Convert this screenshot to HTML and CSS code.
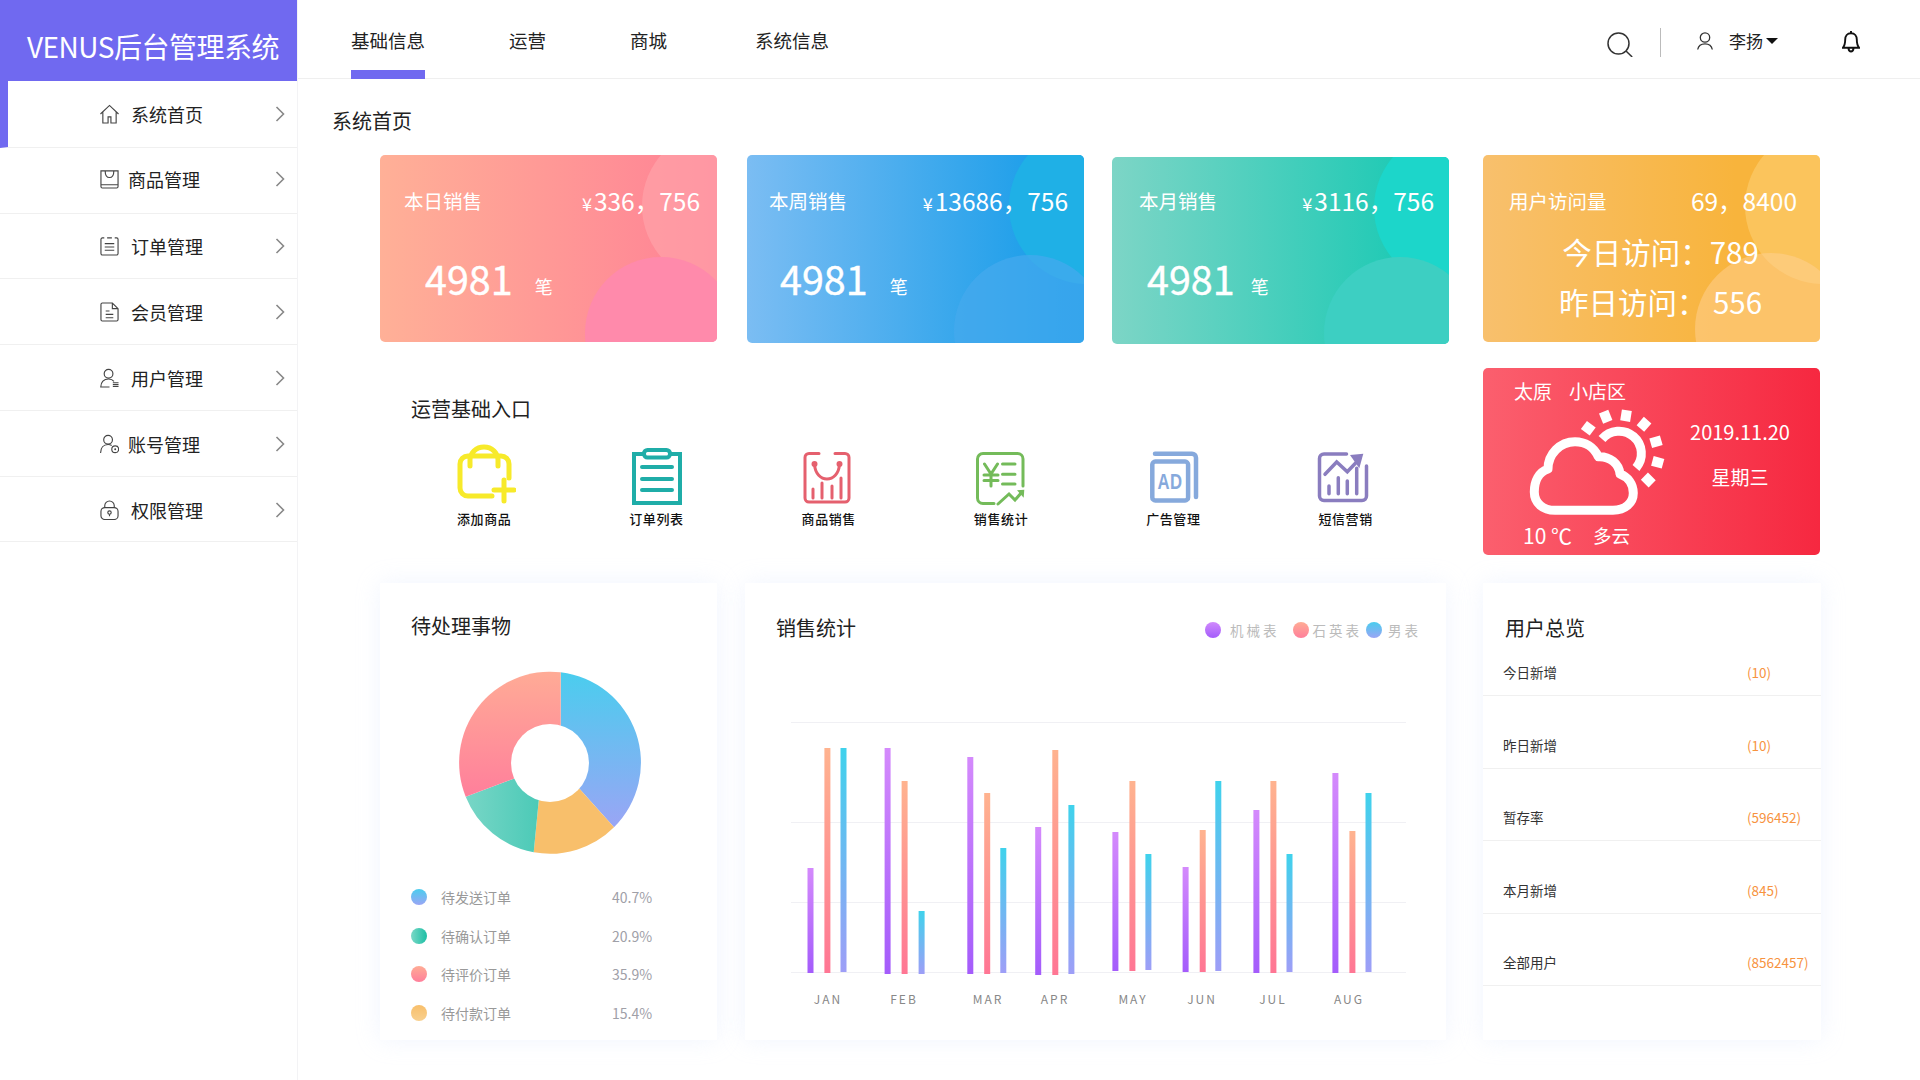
FILE: index.html
```html
<!DOCTYPE html>
<html lang="zh-CN">
<head>
    <meta charset="UTF-8">
    <title>VENUS后台管理系统</title>
    <link rel="stylesheet" href="styles.css">
</head>
<body>
<div class="app">
    <aside class="sidebar">
        <div class="logo">VENUS后台管理系统</div>
        <nav class="side-nav">
            <a class="side-item active">
                <svg class="side-icon" viewBox="0 0 20 20"><path d="M.5 10 10 1l9.500 9M3 8v11.500h5.500V13h3v6.500H17V8"/></svg>
                <span>系统首页</span>
                <svg class="chevron" viewBox="0 0 10 16"><path d="M1.500 1 8.500 8l-7 7"/></svg>
            </a>
            <a class="side-item tight">
                <svg class="side-icon" viewBox="0 0 20 20"><path d="M1 1.500h18V18a1.500 1.500 0 0 1-1.500 1.500h-15A1.500 1.500 0 0 1 1 18zM1 16h18M5.500 2c0 8.500 9 8.500 9 0"/></svg>
                <span>商品管理</span>
                <svg class="chevron" viewBox="0 0 10 16"><path d="M1.500 1 8.500 8l-7 7"/></svg>
            </a>
            <a class="side-item short">
                <svg class="side-icon" viewBox="0 0 20 20"><path d="M4.500 1.500h-2A1.500 1.500 0 0 0 1 3v15a1.500 1.500 0 0 0 1.500 1.500h15A1.500 1.500 0 0 0 19 18V3a1.500 1.500 0 0 0-1.500-1.500h-2M7.500 1.500h5M5 7.500h10M5 11h10M5 14.500h10"/></svg>
                <span>订单管理</span>
                <svg class="chevron" viewBox="0 0 10 16"><path d="M1.500 1 8.500 8l-7 7"/></svg>
            </a>
            <a class="side-item">
                <svg class="side-icon" viewBox="0 0 20 20"><path d="M2.500.5H13l6 6V18a1.500 1.500 0 0 1-1.500 1.500h-15A1.500 1.500 0 0 1 1 18V2A1.500 1.500 0 0 1 2.500.5zM13 .5v6h6M6 9h4M6 12.500h8M6 16h8"/></svg>
                <span>会员管理</span>
                <svg class="chevron" viewBox="0 0 10 16"><path d="M1.500 1 8.500 8l-7 7"/></svg>
            </a>
            <a class="side-item">
                <svg class="side-icon" viewBox="0 0 20 20"><circle cx="9" cy="5.500" r="4.600"/><path d="M10 19.500H.8c0-5 3.200-8.500 8.200-8.500 2.500 0 4.500 1 5.700 2.500M13.500 15H19.500M13.500 17H19.500M13.500 19H19.500"/></svg>
                <span>用户管理</span>
                <svg class="chevron" viewBox="0 0 10 16"><path d="M1.500 1 8.500 8l-7 7"/></svg>
            </a>
            <a class="side-item tight">
                <svg class="side-icon" viewBox="0 0 20 20"><circle cx="8.500" cy="5.500" r="4.600"/><path d="M.6 19.500c0-5.500 3-9 7.900-9 1.500 0 2.800.4 3.800 1"/><circle cx="16" cy="15.500" r="3.600"/><circle cx="16" cy="15.500" r="1" class="solid"/></svg>
                <span>账号管理</span>
                <svg class="chevron" viewBox="0 0 10 16"><path d="M1.500 1 8.500 8l-7 7"/></svg>
            </a>
            <a class="side-item short">
                <svg class="side-icon" viewBox="0 0 20 20"><rect x="1" y="7.500" width="18" height="12.500" rx="4"/><path d="M5 7.500V5.500a5 5 0 0 1 10 0v2M10 16.500v-2"/><circle cx="10" cy="12.700" r="1.800"/></svg>
                <span>权限管理</span>
                <svg class="chevron" viewBox="0 0 10 16"><path d="M1.500 1 8.500 8l-7 7"/></svg>
            </a>
        </nav>
    </aside>

    <div class="content">
        <header class="topbar">
            <div class="tabs">
                <a class="tab active">基础信息</a>
                <a class="tab">运营</a>
                <a class="tab">商城</a>
                <a class="tab">系统信息</a>
            </div>
            <div class="tools">
                <svg class="icon-search" viewBox="0 0 26 25"><circle cx="11.500" cy="11.500" r="10.500"/><path d="m19 19 6.200 6"/></svg>
                <span class="divider"></span>
                <svg class="icon-user" viewBox="0 0 16 18"><circle cx="8" cy="5.500" r="4.700"/><path d="M.7 17.500C1.500 13 5 11.800 8 11.800s6.500 1.200 7.300 5.700"/></svg>
                <span class="user-name">李扬</span>
                <span class="caret"></span>
                <svg class="icon-bell" viewBox="0 0 18 23"><path d="M9 3.200c-3.800 0-5.800 2.800-5.800 6.300 0 4-.8 6.500-2.400 8.300h16.400c-1.600-1.800-2.400-4.300-2.400-8.300 0-3.500-2-6.300-5.800-6.300zM9 3V1M6.500 18.500c.3 2 1.200 3 2.500 3s2.200-1 2.500-3"/></svg>
            </div>
        </header>

        <main class="page">
            <h1 class="page-title">系统首页</h1>

            <div class="row row-stats">
                <section class="stat stat-day">
                    <div class="stat-head"><span>本日销售</span><span class="stat-value"><small>¥</small>336，756</span></div>
                    <div class="stat-count"><b>4981</b><span>笔</span></div>
                </section>
                <section class="stat stat-week">
                    <div class="stat-head"><span>本周销售</span><span class="stat-value"><small>¥</small>13686，756</span></div>
                    <div class="stat-count"><b>4981</b><span>笔</span></div>
                </section>
                <section class="stat stat-month">
                    <div class="stat-head"><span>本月销售</span><span class="stat-value"><small>¥</small>3116，756</span></div>
                    <div class="stat-count"><b>4981</b><span>笔</span></div>
                </section>
                <section class="stat stat-visit">
                    <div class="stat-head"><span>用户访问量</span><span class="stat-value">69，8400</span></div>
                    <div class="visit-line first">今日访问：789</div>
                    <div class="visit-line">昨日访问： 556</div>
                </section>
            </div>

            <div class="row row-entry">
                <section class="entry">
                    <h2 class="entry-title">运营基础入口</h2>
                    <div class="entry-grid">
                        <a class="entry-item">
                            <svg viewBox="0 0 64 62" class="ico-yellow"><path d="M40 52H16a8 8 0 0 1-8-8V20a8 8 0 0 1 8-8h33a8 8 0 0 1 8 8v14M18 22v-6a14 13 0 0 1 28 0v6M42 46h20M52 36v21"/></svg>
                            <span>添加商品</span>
                        </a>
                        <a class="entry-item">
                            <svg viewBox="0 0 64 62" class="ico-teal"><rect x="10" y="10" width="46" height="49"/><rect x="20" y="6" width="26" height="7.500" rx="3.500" class="clip"/><path d="M18 23h30M18 35h30M18 46h30"/></svg>
                            <span>订单列表</span>
                        </a>
                        <a class="entry-item">
                            <svg viewBox="0 0 64 62" class="ico-red"><path d="M22 9.500H12a4 4 0 0 0-4 4V54a4 4 0 0 0 4 4h36a4 4 0 0 0 4-4V13.500a4 4 0 0 0-4-4H38M17.500 20C18 30 24 35 30 35s12-5 12.500-15M16 54v-9M25 54V39M35 54V42M44 54V34"/><circle cx="17.500" cy="20" r="1.500"/><circle cx="42.500" cy="20" r="1.500"/></svg>
                            <span>商品销售</span>
                        </a>
                        <a class="entry-item">
                            <svg viewBox="0 0 64 62" class="ico-green"><path d="M25 59.500H14A5.500 5.500 0 0 1 8.500 54V15A5.500 5.500 0 0 1 14 9.500h34.500A5.500 5.500 0 0 1 54 15v27M15.500 20 22 30l6.500-10M22 30v12M15 31h14M15 36.500h14M33.500 20H46M33.500 30.300H46M33.500 40H46M29 60l11-10 6 6 7-8"/><path d="m48 46.300 7.300-.6-.6 8z" class="solid"/></svg>
                            <span>销售统计</span>
                        </a>
                        <a class="entry-item">
                            <svg viewBox="0 0 64 62" class="ico-blue"><rect x="11.300" y="17.600" width="35.800" height="38.800" rx="3"/><path d="M14 9.700h37a4 4 0 0 1 4 4V53"/><text x="16.500" y="44.500" textLength="25" lengthAdjust="spacingAndGlyphs">AD</text></svg>
                            <span>广告管理</span>
                        </a>
                        <a class="entry-item">
                            <svg viewBox="0 0 64 62" class="ico-purple"><path d="M32.500 10H10a4.500 4.500 0 0 0-4.500 4.500V52a4.500 4.500 0 0 0 4.500 4.500h38a4.500 4.500 0 0 0 4.500-4.500V22M11 30.300 22.700 18l10.600 9.700 11-11.400M15 49.700V42M24.300 49.700V33.700M33.300 49.700V37M42.700 49.700V24.300"/><path d="m36 11 13.300-1.300-4 14.600z" class="solid"/></svg>
                            <span>短信营销</span>
                        </a>
                    </div>
                </section>

                <section class="weather">
                    <div class="weather-left">
                        <div class="weather-place"><span>太原</span><span>小店区</span></div>
                        <svg class="weather-icon" viewBox="0 0 145 112">
                            <path d="M32 102.300h58c12 0 20.300-7.300 20.300-17.300 0-9-5.300-16-13.300-19-1-10-10-18-21.700-17.300C71 39 62 33.700 52 33.700 37 33.700 25 46 25 61c-9 3-13.700 12-13.700 23 0 11 8.700 18.300 20.700 18.300z"/>
                            <path d="M79 31a22 22 0 1 1 34 29"/>
                            <g class="rays">
                                <rect x="-5" y="-5.500" width="10" height="11" transform="translate(65.300 20.300) rotate(-53)"/>
                                <rect x="-5" y="-5.500" width="10" height="11" transform="translate(82.700 8.700) rotate(-22)"/>
                                <rect x="-5" y="-5.500" width="10" height="11" transform="translate(103 7.700) rotate(9)"/>
                                <rect x="-5" y="-5.500" width="10" height="11" transform="translate(121 16.300) rotate(41)"/>
                                <rect x="-5" y="-5.500" width="10" height="11" transform="translate(133 33.700) rotate(74)"/>
                                <rect x="-5" y="-5.500" width="10" height="11" transform="translate(134.700 54.300) rotate(105)"/>
                                <rect x="-5" y="-5.500" width="10" height="11" transform="translate(125.300 72) rotate(135)"/>
                            </g>
                        </svg>
                        <div class="weather-now"><span class="temp">10 ℃</span><span>多云</span></div>
                    </div>
                    <div class="weather-right">
                        <div class="weather-date">2019.11.20</div>
                        <div class="weather-day">星期三</div>
                    </div>
                </section>
            </div>

            <div class="row row-panels">
                <section class="panel panel-todo">
                    <h2 class="panel-title">待处理事物</h2>
                    <svg class="donut" viewBox="0 0 186 186">
                        <defs>
                            <linearGradient id="gBlue" x1="0" y1="0" x2="0" y2="1"><stop offset="0" stop-color="#4acdee"/><stop offset="1" stop-color="#9aa5f5"/></linearGradient>
                            <linearGradient id="gPink" x1="0" y1="0" x2="0" y2="1"><stop offset="0" stop-color="#ffab96"/><stop offset="1" stop-color="#ff7f9b"/></linearGradient>
                            <linearGradient id="gGreen" x1="0" y1="0" x2="1" y2="0"><stop offset="0" stop-color="#78d6c6"/><stop offset="1" stop-color="#45c8b5"/></linearGradient>
                        </defs>
                        <path fill="url(#gBlue)" d="M103.700 2.300A91 91 0 0 1 157 157.300L122.700 119 93 93l10.700-38.300z"/>
                        <path fill="#f8bf6b" d="M157 157.300A91 91 0 0 1 76.700 182.300L81.700 130.700 93 93l29.700 26z"/>
                        <path fill="url(#gGreen)" d="M76.700 182.300A91 91 0 0 1 8.700 126.700L56 109l37-16-11.300 37.700z"/>
                        <path fill="url(#gPink)" d="M8.700 126.700A91 91 0 0 1 103.700 2.300V54.700L93 93l-37 16z"/>
                        <circle cx="93" cy="93" r="39" fill="#fff"/>
                    </svg>
                    <ul class="todo-list">
                        <li><i class="dot dot-blue"></i><span>待发送订单</span><em>40.7%</em></li>
                        <li><i class="dot dot-green"></i><span>待确认订单</span><em>20.9%</em></li>
                        <li><i class="dot dot-pink"></i><span>待评价订单</span><em>35.9%</em></li>
                        <li><i class="dot dot-orange"></i><span>待付款订单</span><em>15.4%</em></li>
                    </ul>
                </section>

                <section class="panel panel-sales">
                    <div class="sales-head">
                        <h2 class="panel-title">销售统计</h2>
                        <div class="legend">
                            <i class="dot dot-purple"></i><span class="lg-a">机械表</span>
                            <i class="dot dot-pink"></i><span class="lg-b">石英表</span>
                            <i class="dot dot-blue"></i><span class="lg-c">男表</span>
                        </div>
                    </div>
                    <svg class="chart" viewBox="0 65 701 391">
                        <defs>
                            <linearGradient id="barA" x1="0" y1="0" x2="0" y2="1"><stop offset="0" stop-color="#d48afc"/><stop offset="1" stop-color="#a45cfb"/></linearGradient>
                            <linearGradient id="barB" x1="0" y1="0" x2="0" y2="1"><stop offset="0" stop-color="#ffb38f"/><stop offset="1" stop-color="#ff7694"/></linearGradient>
                            <linearGradient id="barC" x1="0" y1="0" x2="0" y2="1"><stop offset="0" stop-color="#3fd2ec"/><stop offset="1" stop-color="#9e9ef7"/></linearGradient>
                        </defs>
                        <g class="grid">
                            <line x1="46" x2="661" y1="138.500" y2="138.500"/>
                            <line x1="46" x2="661" y1="238.500" y2="238.500"/>
                            <line x1="46" x2="661" y1="318.500" y2="318.500"/>
                            <line x1="46" x2="661" y1="388.500" y2="388.500"/>
                        </g>
                        <g fill="url(#barA)">
                            <rect x="62.500" y="284" width="6" height="105"/>
                            <rect x="139.600" y="164" width="6" height="226"/>
                            <rect x="222.300" y="173" width="6" height="217"/>
                            <rect x="290.200" y="243" width="6" height="148"/>
                            <rect x="367.400" y="248" width="6" height="139"/>
                            <rect x="437.600" y="283" width="6" height="105"/>
                            <rect x="508.400" y="226" width="6" height="163"/>
                            <rect x="587.400" y="189" width="6" height="200"/>
                        </g>
                        <g fill="url(#barB)">
                            <rect x="79.400" y="164" width="6" height="225"/>
                            <rect x="156.600" y="197" width="6" height="193"/>
                            <rect x="239.200" y="209" width="6" height="181"/>
                            <rect x="307.300" y="166" width="6" height="225"/>
                            <rect x="384.400" y="197" width="6" height="190"/>
                            <rect x="454.700" y="246" width="6" height="142"/>
                            <rect x="525.400" y="197" width="6" height="192"/>
                            <rect x="604.400" y="247" width="6" height="142"/>
                        </g>
                        <g fill="url(#barC)">
                            <rect x="95.500" y="164" width="6" height="224"/>
                            <rect x="173.600" y="327" width="6" height="63"/>
                            <rect x="255.300" y="264" width="6" height="125"/>
                            <rect x="323.400" y="221" width="6" height="169"/>
                            <rect x="400.400" y="270" width="6" height="116"/>
                            <rect x="470.300" y="197" width="6" height="190"/>
                            <rect x="541.500" y="270" width="6" height="118"/>
                            <rect x="620.500" y="209" width="6" height="179"/>
                        </g>
                        <g class="months">
                            <text x="83" y="420">JAN</text>
                            <text x="159" y="420">FEB</text>
                            <text x="243" y="420">MAR</text>
                            <text x="310" y="420">APR</text>
                            <text x="388" y="420">MAY</text>
                            <text x="457" y="420">JUN</text>
                            <text x="528" y="420">JUL</text>
                            <text x="604" y="420">AUG</text>
                        </g>
                    </svg>
                </section>

                <section class="panel panel-users">
                    <h2 class="panel-title">用户总览</h2>
                    <ul class="user-list">
                        <li><span>今日新增</span><em>(10)</em></li>
                        <li><span>昨日新增</span><em>(10)</em></li>
                        <li><span>暂存率</span><em>(596452)</em></li>
                        <li><span>本月新增</span><em>(845)</em></li>
                        <li><span>全部用户</span><em>(8562457)</em></li>
                    </ul>
                </section>
            </div>
        </main>
    </div>
</div>
</body>
</html>
```

FILE: styles.css
```css
* {
    box-sizing: border-box;
}

body {
    margin: 0;
    background-color: #fff;
    color: #222;
    font-family: "Noto Sans CJK SC", "Noto Sans", sans-serif;
}

h1, h2, ul {
    margin: 0;
    padding: 0;
    font-weight: normal;
    list-style: none;
}

em {
    font-style: normal;
}

.app {
    display: flex;
    width: 1920px;
    height: 1080px;
    overflow: hidden;
}

/* sidebar */
.sidebar {
    width: 298px;
    flex-shrink: 0;
    border-right: 1px solid #f3f3f5;
}

.logo {
    height: 81px;
    padding-left: 27px;
    background-color: #7069f0;
    color: #fff;
    font-size: 28px;
    line-height: 93px;
    letter-spacing: -0.500px;
    white-space: nowrap;
}

.side-item {
    display: flex;
    align-items: center;
    height: 66px;
    padding: 1px 12px 0 100px;
    border-bottom: 1px solid #f0f0f0;
    font-size: 18px;
    color: #222;
}

.side-item.short {
    height: 65px;
}

.side-item.active {
    height: 67px;
    border-left: 8px solid #7069f0;
    padding: 0 12px 1px 92px;
}

.side-item:nth-child(2) {
    padding-top: 0;
    padding-bottom: 3px;
}

.side-item:nth-child(3) {
    padding-top: 0;
}

.side-icon {
    width: 19px;
    height: 20px;
    margin-right: 12px;
    fill: none;
    stroke: #444;
    stroke-width: 1.200;
}

.side-item.tight .side-icon {
    margin-right: 9px;
}

.side-icon .solid {
    fill: #444;
    stroke: none;
}

.chevron {
    width: 10px;
    height: 16px;
    margin-left: auto;
    fill: none;
    stroke: #888;
    stroke-width: 1.600;
}

/* top bar */
.content {
    flex: 1;
    min-width: 0;
}

.topbar {
    display: flex;
    align-items: center;
    height: 79px;
    padding-left: 53px;
    border-bottom: 1px solid #efefef;
}

.tabs {
    display: flex;
    gap: 84px;
    height: 79px;
}

.tab {
    position: relative;
    font-size: 18.500px;
    line-height: 80px;
    color: #222;
}

.tab:last-child {
    margin-left: 4px;
}

.tab.active::after {
    content: "";
    position: absolute;
    left: 0;
    right: 0;
    bottom: 0;
    height: 9px;
    background-color: #7069f0;
}

.tools {
    display: flex;
    align-items: center;
    margin-left: auto;
    padding-right: 60px;
}

.tools svg {
    fill: none;
    stroke: #333;
}

.icon-search {
    width: 26px;
    height: 25px;
    margin-top: 10px;
    stroke-width: 1.500;
}

.divider {
    width: 1px;
    height: 29px;
    margin: 6px 36px 0 27px;
    background-color: #bbb;
}

.icon-user {
    width: 16px;
    height: 18px;
    margin-right: 16px;
    margin-top: 4px;
    stroke-width: 1.300;
}

.user-name {
    font-size: 17px;
    margin-top: 3px;
}

.caret {
    width: 0;
    height: 0;
    margin: 4px 0 0 3px;
    border-left: 6px solid transparent;
    border-right: 6px solid transparent;
    border-top: 6px solid #111;
}

.icon-bell {
    width: 18px;
    height: 23px;
    margin: 4px 0 0 64px;
    stroke-width: 1.900;
    stroke: #111 !important;
}

/* main area */
.page {
    padding-left: 34px;
}

.page-title {
    height: 76px;
    font-size: 20px;
    line-height: 84px;
}

.row {
    display: flex;
    align-items: flex-start;
    margin-left: 48px;
}

/* stat cards */
.row-stats {
    height: 189px;
}

.stat {
    position: relative;
    width: 337px;
    height: 187px;
    overflow: hidden;
    border-radius: 5px;
    color: #fff;
}

.stat::before,
.stat::after {
    content: "";
    position: absolute;
    border-radius: 50%;
}

.stat::before {
    left: 262px;
    top: -27px;
    width: 156px;
    height: 156px;
}

.stat::after {
    left: 207px;
    top: 100px;
    width: 152px;
    height: 152px;
}

.stat > * {
    position: relative;
    z-index: 1;
}

.stat-head {
    display: flex;
    justify-content: space-between;
    align-items: center;
    height: 36px;
    margin-top: 27px;
    padding: 0 17px 0 24px;
    font-size: 19.500px;
}

.stat-value {
    font-size: 24.500px;
}

.stat-value small {
    margin-right: 2px;
    font-size: 18px;
}

.stat-count {
    display: flex;
    align-items: baseline;
    gap: 22px;
    height: 52px;
    margin-top: 34px;
    padding-left: 45px;
    line-height: 52px;
    font-size: 18px;
}

.stat-count b {
    font-size: 39.500px;
    font-weight: normal;
    -webkit-text-stroke: 0.400px #fff;
}

.stat-count span {
    position: relative;
    top: -1px;
}

.stat-day {
    background: linear-gradient(90deg, #ffb097, #ff8195);
}

.stat-day::before {
    background-color: rgba(255, 170, 175, 0.55);
}

.stat-day::after {
    left: 205px;
    top: 102px;
    background-color: #ff8aab;
}

.stat-week {
    height: 188px;
    margin-left: 30px;
    background: linear-gradient(90deg, #7bbdf3, #0f9ae8);
}

.stat-week::before {
    background-color: #1fb0e6;
}

.stat-week::after {
    background-color: rgba(70, 170, 238, 0.7);
}

.stat-week .stat-head {
    padding: 0 16px 0 22px;
}

.stat-week .stat-count {
    padding-left: 33px;
}

.stat-month {
    margin: 2px 0 0 28px;
    background: linear-gradient(90deg, #7dd5c6, #10c8b2);
}

.stat-month::before {
    background-color: #1cd6ca;
}

.stat-month::after {
    left: 212px;
    background-color: #3dcfc2;
}

.stat-month .stat-head {
    margin-top: 25px;
    padding: 0 15px 0 27px;
}

.stat-month .stat-count {
    gap: 16px;
    padding-left: 35px;
}

.stat-visit {
    margin-left: 34px;
    background: linear-gradient(90deg, #f8c06d, #f8b43c 75%);
}

.stat-visit::before {
    background-color: rgba(255, 215, 130, 0.45);
}

.stat-visit::after {
    left: 212px;
    top: 98px;
    background-color: rgba(255, 210, 150, 0.5);
}

.stat-visit .stat-head {
    padding: 0 23px 0 26px;
}

.visit-line {
    padding-left: 18px;
    font-size: 29.500px;
    line-height: 50px;
    text-align: center;
}

.visit-line.first {
    margin-top: 8px;
}

/* entry section */
.row-entry {
    margin-top: 24px;
    height: 187px;
}

.entry {
    width: 1069px;
}

.entry-title {
    padding: 27px 0 0 31px;
    font-size: 20px;
    line-height: 28px;
}

.entry-grid {
    display: flex;
    margin: 21px 0 0 18px;
}

.entry-item {
    display: flex;
    flex-direction: column;
    align-items: center;
    width: 172.300px;
    font-size: 13px;
    font-weight: 500;
    letter-spacing: 0.600px;
    color: #111;
}

.entry-item svg {
    width: 64px;
    height: 62px;
    fill: none;
    stroke-linecap: round;
    margin-bottom: 3px;
}

.entry-item span {
    line-height: 20px;
}

.ico-yellow {
    stroke: #f7ea2a;
    stroke-width: 5;
}

.ico-teal {
    stroke: #1fada8;
    stroke-width: 4;
}

.ico-teal .clip {
    fill: #fff;
}

.ico-red {
    stroke: #e5606e;
    stroke-width: 3;
}

.ico-green {
    stroke: #74bb5a;
    stroke-width: 3;
}

.ico-green .solid,
.ico-purple .solid {
    stroke: none;
}

.ico-green .solid {
    fill: #74bb5a;
}

.ico-blue {
    stroke: #86a9dc;
    stroke-width: 4.500;
}

.ico-blue text {
    fill: #86a9dc;
    stroke: none;
    font-family: "Liberation Sans", sans-serif;
    font-size: 22px;
    font-weight: bold;
}

.ico-purple {
    stroke: #8a7dbf;
    stroke-width: 3.500;
}

.ico-purple .solid {
    fill: #8a7dbf;
}

/* weather */
.weather {
    display: flex;
    width: 337px;
    height: 187px;
    margin-left: 34px;
    border-radius: 5px;
    background: linear-gradient(90deg, #fb5f6e, #f62840);
    color: #fff;
}

.weather-left {
    width: 190px;
    padding: 9px 0 0 31px;
}

.weather-place {
    display: flex;
    gap: 17px;
    font-size: 19px;
    line-height: 28px;
}

.weather-icon {
    display: block;
    width: 145px;
    height: 112px;
    margin: 3px 0 1px 9px;
    fill: none;
    stroke: #fff;
    stroke-width: 9;
    stroke-linejoin: round;
}

.weather-icon .rays {
    fill: #fff;
    stroke: none;
}

.weather-now {
    display: flex;
    padding-left: 9px;
    font-size: 18.500px;
    line-height: 28px;
}

.temp {
    width: 70px;
    font-size: 21px;
}

.weather-right {
    width: 134px;
    padding-top: 50px;
    text-align: center;
}

.weather-date {
    font-size: 20px;
    line-height: 28px;
}

.weather-day {
    margin-top: 17px;
    font-size: 19px;
    line-height: 28px;
}

/* bottom panels */
.row-panels {
    margin-top: 28px;
}

.panel {
    height: 457px;
    background-color: #fff;
    box-shadow: 0 0 22px rgba(205, 218, 250, 0.28);
}

.panel-title {
    font-size: 20px;
    line-height: 28px;
}

.panel-todo {
    width: 337px;
    padding: 29px 31px 0;
}

.donut {
    display: block;
    width: 186px;
    height: 186px;
    margin: 30px 0 0 46px;
}

.todo-list {
    margin-top: 22px;
}

.todo-list li {
    display: flex;
    align-items: center;
    height: 38.600px;
    font-size: 14px;
    color: #999;
}

.todo-list span {
    width: 171px;
}

.todo-list em {
    color: #a0a0a8;
}

.dot {
    display: block;
    flex-shrink: 0;
    width: 16px;
    height: 16px;
    border-radius: 50%;
}

.todo-list .dot {
    margin-right: 14px;
}

.dot-blue {
    background: linear-gradient(180deg, #4acdee, #9aa5f5);
}

.dot-green {
    background: linear-gradient(90deg, #7ad8c6, #1cbfa5);
}

.dot-pink {
    background: linear-gradient(180deg, #ffac95, #ff7f9b);
}

.dot-orange {
    background: linear-gradient(180deg, #f8bf6b, #f8d08f);
}

.dot-purple {
    background: linear-gradient(180deg, #d08afc, #a45cfb);
}

.panel-sales {
    width: 701px;
    margin-left: 28px;
}

.sales-head {
    display: flex;
    justify-content: space-between;
    align-items: center;
    height: 66px;
    padding: 24px 25px 0 31px;
}

.legend {
    display: flex;
    align-items: center;
    margin-top: 3px;
    font-size: 13.500px;
    letter-spacing: 3px;
    color: #bbb;
}

.lg-a {
    margin: 0 13px 0 9px;
}

.lg-b {
    margin: 0 4px 0 4px;
}

.lg-c {
    margin-left: 6px;
}

.chart {
    display: block;
    width: 701px;
    height: 391px;
}

.chart .grid line {
    stroke: #f0f0f4;
}

.months text {
    fill: #888;
    font-size: 12px;
    letter-spacing: 2px;
    text-anchor: middle;
}

.panel-users {
    width: 338px;
    margin-left: 37px;
}

.panel-users .panel-title {
    padding: 31px 0 0 22px;
    height: 61px;
}

.user-list li {
    display: flex;
    align-items: flex-end;
    height: 72.500px;
    padding: 0 0 13px 20px;
    border-bottom: 1px solid #f0f0f0;
    font-size: 13.500px;
    line-height: 20px;
    color: #333;
}

.user-list li:first-child {
    height: 52px;
}

.user-list span {
    width: 244px;
}

.user-list em {
    color: #f7933f;
}
```
